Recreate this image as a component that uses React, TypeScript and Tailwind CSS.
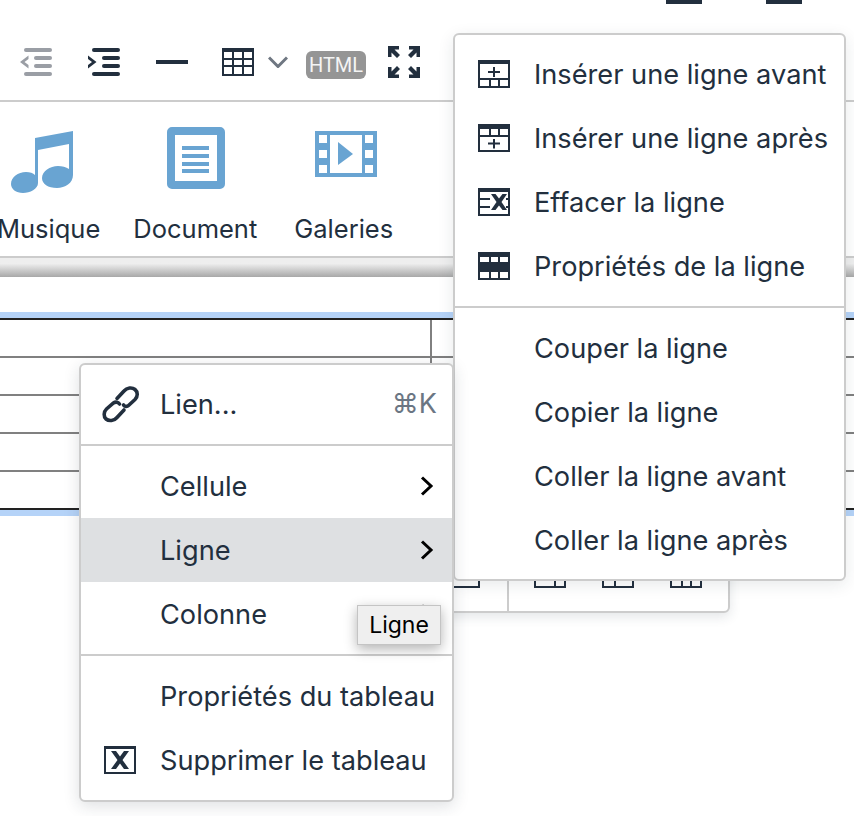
import type { ReactNode } from "react";

const INK = "#222f3e";

function TableIcon({ children }: { children: ReactNode }) {
  return (
    <svg width="32" height="28" viewBox="0 0 32 28" className="shrink-0" fill={INK}>
      <path fillRule="evenodd" d="M0 0h32v28H0zM2 4v22h28V4z" />
      {children}
    </svg>
  );
}

const bar = (y: number) => <rect x="2" y={y} width="28" height="2" />;
const cells = (y: number) => (
  <>
    <rect x="2" y={y} width="28" height="2" />
    <rect x="11" y={y} width="2" height="8" />
    <rect x="20" y={y} width="2" height="8" />
  </>
);

const ROW_ICONS: Record<string, ReactNode> = {
  before: (
    <TableIcon>
      <path d="M15 7h2v4h5v2h-5v4h-2v-4h-5v-2h5z" />
      {cells(18)}
    </TableIcon>
  ),
  after: (
    <TableIcon>
      <path d="M15 15h2v3.500h5v2h-5v4h-2v-4h-5v-2h5z" />
      {cells(3)}
      {bar(11)}
    </TableIcon>
  ),
  erase: (
    <TableIcon>
      {bar(10)}
      {bar(18)}
      <path fill="#fff" d="M12 6h18v17H12z" />
      <path d="M13 6h4.500l3.500 4.500L24.500 6H29l-5.500 8 5.500 8h-4.500L21 17.500 17.500 22H13l5.500-8z" />
      <rect x="28" y="10" width="2" height="2" />
      <rect x="28" y="18" width="2" height="2" />
    </TableIcon>
  ),
  props: (
    <TableIcon>
      {cells(3)}
      <rect x="2" y="10" width="28" height="9" />
      {cells(18)}
    </TableIcon>
  ),
};

function MenuRow({
  icon,
  label,
  right,
  active,
}: {
  icon?: ReactNode;
  label: string;
  right?: ReactNode;
  active?: boolean;
}) {
  return (
    <div className={`relative flex h-[64px] items-center pl-[79px] ${active ? "bg-[#dee0e2]" : ""}`}>
      {icon && <span className="absolute left-[23px] flex items-center">{icon}</span>}
      <span className="mt-[2px] whitespace-nowrap">{label}</span>
      {right && <span className="absolute right-[15px] flex items-center">{right}</span>}
    </div>
  );
}

const Chevron = () => (
  <svg width="14" height="22" viewBox="0 0 14 22" fill="none" stroke="#000" strokeWidth="3" className="mr-[3px]">
    <path d="M2 2.500 11 11 2 19.500" />
  </svg>
);

const Divider = () => <div className="my-[8px] h-[2px] bg-[#ccc]" />;

function ToolbarIcons() {
  return (
    <div className="flex h-[98px] items-start border-b-2 border-[#ccc]">
      <div className="flex items-start pl-[20px] pt-[42px]">
        <svg width="32" height="32" viewBox="0 0 32 32" className="mt-[2px]" fill="#9a9ea5">
          <rect x="4" y="0" width="28" height="4" rx="2" />
          <rect x="14" y="8" width="18" height="4" rx="2" />
          <rect x="14" y="16" width="18" height="4" rx="2" />
          <rect x="4" y="24" width="28" height="4" rx="2" />
          <path d="M8.500 7.500 0 14l8.500 6.500v-3.500L4.500 14l4-3z" />
        </svg>
        <svg width="32" height="32" viewBox="0 0 32 32" className="ml-[36px] mt-[2px]" fill={INK}>
          <rect x="4" y="0" width="28" height="4" rx="2" />
          <rect x="14" y="8" width="18" height="4" rx="2" />
          <rect x="14" y="16" width="18" height="4" rx="2" />
          <rect x="4" y="24" width="28" height="4" rx="2" />
          <path d="M0 7.500 8.500 14 0 20.500V17l4-3-4-3z" />
        </svg>
        <div className="ml-[36px] mt-[14px] h-[4px] w-[32px] bg-[#222f3e]" />
        <svg width="32" height="28" viewBox="0 0 32 28" className="ml-[34px] mt-[2px]" fill={INK}>
          <path
            fillRule="evenodd"
            d="M0 0h32v28H0zM2 4v6h8V4zM12 4v6h8V4zM22 4v6h8V4zM2 12v5h8v-5zM12 12v5h8v-5zM22 12v5h8v-5zM2 19v7h8v-7zM12 19v7h8v-7zM22 19v7h8v-7z"
          />
        </svg>
        <svg width="20" height="12" viewBox="0 0 20 12" className="ml-[14px] mt-[10px]" fill="none" stroke="#6f7782" strokeWidth="3">
          <path d="M1 1.500 10 10.500 19 1.500" />
        </svg>
        <span
          className="ml-[18px] mt-[5px] flex h-[28px] w-[60px] items-center justify-center rounded-[6px] bg-[#959595] text-[20px] leading-none text-[#f4f4f4]"
          style={{ fontFamily: "Roboto, sans-serif" }}
        >
          HTML
        </span>
        <svg width="32" height="32" viewBox="0 0 32 32" className="ml-[22px]" fill={INK}>
          <path d="M0 0h11v3.500H6.500L12 9l-3 3-5.500-5.500V11H0z" />
          <path d="M32 0H21v3.500h4.500L20 9l3 3 5.500-5.500V11H32z" />
          <path d="M0 32h11v-3.500H6.500L12 23l-3-3-5.500 5.500V21H0z" />
          <path d="M32 32H21v-3.500h4.500L20 23l3-3 5.500 5.500V21H32z" />
        </svg>
      </div>
    </div>
  );
}

function MediaRow() {
  return (
    <div className="-ml-[3px] flex h-[156px] gap-[33px] border-b-2 border-[#ccc] pt-[29px] text-[25.500px] text-[#222f3e]">
      <div className="flex flex-col items-center">
        <svg width="76" height="62" viewBox="0 0 76 62" className="mb-[19px]" fill="#69a4d2">
          <path d="M24 7 62 0v44c0 8-8 13-16 13-9 0-15-4-15-10 0-7 8-12 16-12 4 0 8 1 11 3V13L27 19v33c0 6-8 10-15 10-7 0-12-4-12-9 0-7 7-12 15-12 4 0 7 1 9 3z" />
        </svg>
        <span className="leading-[34px]">Musique</span>
      </div>
      <div className="flex flex-col items-center">
        <svg width="58" height="62" viewBox="0 0 58 62" className="-mt-[4px] mb-[23px] ml-[2px]" fill="#69a4d2">
          <path fillRule="evenodd" d="M5 0h48a5 5 0 0 1 5 5v52a5 5 0 0 1-5 5H5a5 5 0 0 1-5-5V5a5 5 0 0 1 5-5zM8 8v46h42V8z" />
          <path d="M15 19h27v4H15zM15 27h27v4H15zM15 35h27v4H15zM15 42h27v4H15z" />
        </svg>
        <span className="leading-[34px]">Document</span>
      </div>
      <div className="ml-[4px] flex flex-col items-center">
        <svg width="62" height="46" viewBox="0 0 62 46" className="mb-[35px] ml-[4px]" fill="#69a4d2">
          <path fillRule="evenodd" d="M0 0h62v46H0zM4 4v8h8V4zM50 4v8h8V4zM4 19v8h8v-8zM50 19v8h8v-8zM4 34v8h8v-8zM50 34v8h8v-8zM15 4v38h32V4z" />
          <path d="M23 11 38 23 23 34z" />
        </svg>
        <span className="leading-[34px]">Galeries</span>
      </div>
    </div>
  );
}

function Editor() {
  const rows = [0, 1, 2, 3, 4];
  return (
    <div className="pt-[35px]">
      <div className="border-y-[6px] border-[#b5d3f8]">
        <div className="border-t-2 border-[#222]">
          {rows.map((r) => (
            <div key={r} className={`flex h-[38px] border-b-2 ${r < 4 ? "border-[#808080]" : "border-[#222]"}`}>
              <div className="w-[432px] border-r-2 border-[#808080]" />
              <div className="flex-1" />
            </div>
          ))}
        </div>
      </div>
    </div>
  );
}

export default function App() {
  return (
    <div
      className="relative h-[816px] w-[854px] overflow-hidden bg-white text-[#222f3e]"
      style={{ fontFamily: "Inter, 'Noto Sans', sans-serif" }}
    >
      <div className="flex h-[4px]">
        <div className="ml-[666px] w-[36px] bg-[#222f3e]" />
        <div className="ml-[64px] w-[36px] bg-[#222f3e]" />
      </div>
      <ToolbarIcons />
      <MediaRow />
      <div className="h-[19px] bg-gradient-to-b from-[#eeeeee] from-30% to-[#a8a8a8]" />
      <Editor />

      {/* table context toolbar, mostly under the menus */}
      <div className="absolute left-[300px] top-[540px] h-[73px] w-[430px] rounded-b-[6px] border-2 border-[#ccc] bg-white shadow-[0_4px_12px_rgba(34,47,62,0.12)]">
        <div className="absolute left-[205px] top-0 h-full w-[2px] bg-[#ccc]" />
        <div className="absolute left-[146px] top-[18px]">
          <TableIcon>{cells(10)}</TableIcon>
        </div>
        <div className="absolute left-[232px] top-[18px]">
          <TableIcon>
            <rect x="20" y="10" width="2" height="18" />
          </TableIcon>
        </div>
        <div className="absolute left-[300px] top-[18px]">
          <TableIcon>
            <rect x="12" y="10" width="2" height="18" />
          </TableIcon>
        </div>
        <div className="absolute left-[368px] top-[18px]">
          <TableIcon>
            <rect x="11" y="10" width="2" height="18" />
            <rect x="20" y="10" width="2" height="18" />
          </TableIcon>
        </div>
      </div>

      {/* row submenu */}
      <div className="absolute left-[453px] top-[33px] h-[548px] w-[393px] rounded-[6px] border-2 border-[#ccc] bg-white py-[7px] text-[27.200px] shadow-[0_4px_16px_rgba(34,47,62,0.1)]">
        <MenuRow icon={ROW_ICONS.before} label="Insérer une ligne avant" />
        <MenuRow icon={ROW_ICONS.after} label="Insérer une ligne après" />
        <MenuRow icon={ROW_ICONS.erase} label="Effacer la ligne" />
        <MenuRow icon={ROW_ICONS.props} label="Propriétés de la ligne" />
        <Divider />
        <MenuRow label="Couper la ligne" />
        <MenuRow label="Copier la ligne" />
        <MenuRow label="Coller la ligne avant" />
        <MenuRow label="Coller la ligne après" />
      </div>

      {/* context menu */}
      <div className="absolute left-[79px] top-[363px] h-[439px] w-[375px] overflow-hidden rounded-[6px] border-2 border-[#ccc] bg-white py-[7px] text-[27.200px] shadow-[0_4px_16px_rgba(34,47,62,0.15)]">
        <MenuRow
          icon={
            <svg width="38" height="38" viewBox="7 6 38 38" fill="none" stroke={INK} strokeWidth="3.600" strokeLinecap="round" className="-ml-[2px]">
              <path d="M22 19.500 29 12C32 8.500 37 8 40 10.500 43 13 43 17.500 40 20.500L33.500 26.500C32 28 29.500 27.500 28.500 26" />
              <path d="M24.500 25C23 23 20.500 22.500 18.500 24L11.500 30C8.500 33 8.500 37.500 11 40 14 42.500 19 42 22 38.500L29 31" />
            </svg>
          }
          label="Lien..."
          right={<span className="text-[27px] text-[#6b7683]">⌘K</span>}
        />
        <Divider />
        <MenuRow label="Cellule" right={<Chevron />} />
        <MenuRow label="Ligne" right={<Chevron />} active />
        <MenuRow label="Colonne" right={<Chevron />} />
        <Divider />
        <MenuRow label="Propriétés du tableau" />
        <MenuRow
          icon={
            <svg width="32" height="28" viewBox="0 0 32 28" fill={INK}>
              <path fillRule="evenodd" d="M0 0h32v28H0zM2 3v23h28V3z" />
              <path d="M7 5h5l4 5.500L20 5h5l-6.500 9L25 23h-5l-4-5.500L12 23H7l6.500-9z" />
            </svg>
          }
          label="Supprimer le tableau"
        />
      </div>

      {/* tooltip */}
      <div className="absolute left-[357px] top-[605px] flex h-[40px] w-[84px] items-center justify-center border border-[#c4c4c4] bg-[#efefef] text-[23px] text-black shadow-[0_4px_12px_rgba(0,0,0,0.3)]">
        Ligne
      </div>
    </div>
  );
}
